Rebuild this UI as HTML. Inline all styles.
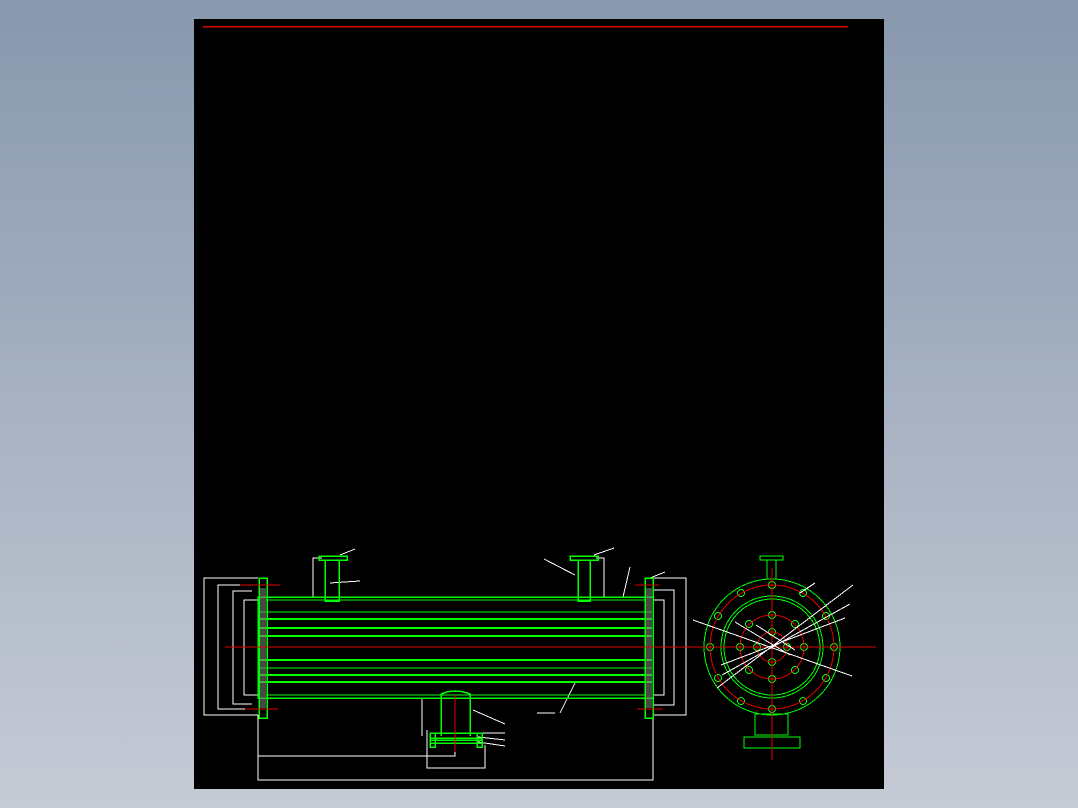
<!DOCTYPE html>
<html><head><style>
html,body{margin:0;padding:0;width:1078px;height:808px;overflow:hidden;background:linear-gradient(#8898ad,#c6cbd6);}
svg{position:absolute;left:0;top:0}
</style></head><body>
<svg width="1078" height="808" viewBox="0 0 1078 808" shape-rendering="crispEdges">
<rect x="194" y="19" width="690" height="770" fill="#000"/>
<line x1="203" y1="26.5" x2="848" y2="26.5" stroke="#e00000" stroke-width="1.5"/>
<g fill="none" stroke="#fff" stroke-width="1">
<polyline points="258,578 204,578 204,715 258,715"/>
<polyline points="258,585 218,585 218,709 258,709"/>
<polyline points="252,591 233,591 233,704 252,704"/>
<polyline points="258,600 244,600 244,695 258,695"/>
<polyline points="653,578 686,578 686,715 653,715"/>
<polyline points="653,590 674,590 674,705 653,705"/>
<polyline points="653,600 664,600 664,695 653,695"/>
<polyline points="258,715 258,780 653,780 653,715"/>
<polyline points="258,756 455,756 455,730"/>
<polyline points="427,730 427,768 485,768 485,745"/>
<polyline points="313,597 313,558 322,558"/>
<polyline points="604,597 604,558 596,558"/>
<line x1="422" y1="698" x2="422" y2="736"/>
<line x1="560" y1="713" x2="575" y2="683"/>
<line x1="537" y1="713" x2="555" y2="713"/>
<line x1="623" y1="597" x2="630" y2="567"/>
<line x1="330" y1="583" x2="360" y2="581"/>
<line x1="544" y1="559" x2="575" y2="575"/>
<line x1="473" y1="710" x2="505" y2="724"/>
<line x1="478" y1="733" x2="505" y2="733"/>
<line x1="478" y1="737" x2="505" y2="740"/>
<line x1="478" y1="742" x2="505" y2="746"/>
<line x1="340" y1="555" x2="355" y2="549"/>
<line x1="594" y1="555" x2="614" y2="548"/>
<line x1="650" y1="578" x2="665" y2="572"/>
</g>
<g fill="none" stroke="#00ff00" stroke-width="1.5">
<rect x="258" y="597" width="395" height="101"/>
<line x1="266" y1="600" x2="645" y2="600" stroke-width="1"/>
<line x1="266" y1="695" x2="645" y2="695" stroke-width="1"/>
<rect x="259" y="578" width="8" height="140"/>
<rect x="645" y="578" width="8" height="140"/>
<rect x="319" y="556" width="28" height="4"/>
<rect x="325" y="560" width="14" height="41"/>
<rect x="570" y="556" width="28" height="4"/>
<rect x="578" y="560" width="12" height="41"/>
<path d="M441,736 V694 Q455,688 470,694 V736"/>
<rect x="430" y="733" width="52" height="10"/>
<rect x="430" y="738" width="52" height="2"/>
<rect x="430" y="733" width="5" height="14"/>
<rect x="477" y="733" width="5" height="14"/>
</g>
<g stroke="#00ff00">
<line x1="260" y1="612" x2="652" y2="612" stroke-width="1"/>
<line x1="260" y1="619" x2="652" y2="619" stroke-width="2"/>
<line x1="260" y1="628" x2="652" y2="628" stroke-width="2"/>
<line x1="260" y1="636" x2="652" y2="636" stroke-width="2"/>
<line x1="260" y1="660" x2="652" y2="660" stroke-width="2"/>
<line x1="260" y1="668" x2="652" y2="668" stroke-width="1"/>
<line x1="260" y1="675" x2="652" y2="675" stroke-width="2"/>
<line x1="260" y1="682" x2="652" y2="682" stroke-width="2"/>
</g>
<g fill="#777"><rect x="260" y="588" width="6" height="120" opacity="0.6"/><rect x="646" y="588" width="6" height="120" opacity="0.6"/></g>
<g stroke="#e00000" stroke-width="1">
<line x1="225" y1="647" x2="694" y2="647"/>
<line x1="455" y1="695" x2="455" y2="752"/>
<line x1="240" y1="585" x2="280" y2="585"/>
<line x1="245" y1="709" x2="278" y2="709"/>
<line x1="635" y1="585" x2="659" y2="585"/>
<line x1="637" y1="709" x2="663" y2="709"/>
</g>
<g fill="none" stroke="#00ff00" stroke-width="1">
<circle cx="772" cy="647" r="68"/>
<circle cx="772" cy="647" r="51"/>
<circle cx="772" cy="647" r="48"/>
<rect x="760" y="556" width="23" height="4"/>
<rect x="767" y="560" width="9" height="19"/>
<rect x="755" y="714" width="33" height="21"/>
<rect x="744" y="737" width="56" height="11"/>
<g>
<circle cx="772" cy="585" r="3.5"/><circle cx="772" cy="709" r="3.5"/>
<circle cx="710" cy="647" r="3.5"/><circle cx="834" cy="647" r="3.5"/>
<circle cx="741" cy="593" r="3.5"/><circle cx="803" cy="593" r="3.5"/>
<circle cx="741" cy="701" r="3.5"/><circle cx="803" cy="701" r="3.5"/>
<circle cx="718" cy="616" r="3.5"/><circle cx="826" cy="616" r="3.5"/>
<circle cx="718" cy="678" r="3.5"/><circle cx="826" cy="678" r="3.5"/>
<circle cx="772" cy="615" r="3.5"/><circle cx="772" cy="679" r="3.5"/>
<circle cx="740" cy="647" r="3.5"/><circle cx="804" cy="647" r="3.5"/>
<circle cx="749" cy="624" r="3.5"/><circle cx="795" cy="624" r="3.5"/>
<circle cx="749" cy="670" r="3.5"/><circle cx="795" cy="670" r="3.5"/>
<circle cx="772" cy="632" r="3.5"/><circle cx="772" cy="662" r="3.5"/>
<circle cx="757" cy="647" r="3.5"/><circle cx="787" cy="647" r="3.5"/>
</g>
</g>
<g fill="none" stroke="#e00000" stroke-width="1">
<circle cx="772" cy="647" r="62"/>
<circle cx="772" cy="647" r="32"/>
<circle cx="772" cy="647" r="15"/>
<line x1="686" y1="647" x2="876" y2="647"/>
<line x1="772" y1="568" x2="772" y2="760"/>
</g>
<g stroke="#fff" stroke-width="1">
<line x1="693" y1="620" x2="852" y2="676"/>
<line x1="717" y1="688" x2="853" y2="585"/>
<line x1="722" y1="675" x2="850" y2="604"/>
<line x1="721" y1="665" x2="845" y2="618"/>
<line x1="735" y1="622" x2="790" y2="655"/>
<line x1="756" y1="625" x2="795" y2="650"/>
<line x1="800" y1="593" x2="815" y2="583"/>
</g>
</svg>
</body></html>
